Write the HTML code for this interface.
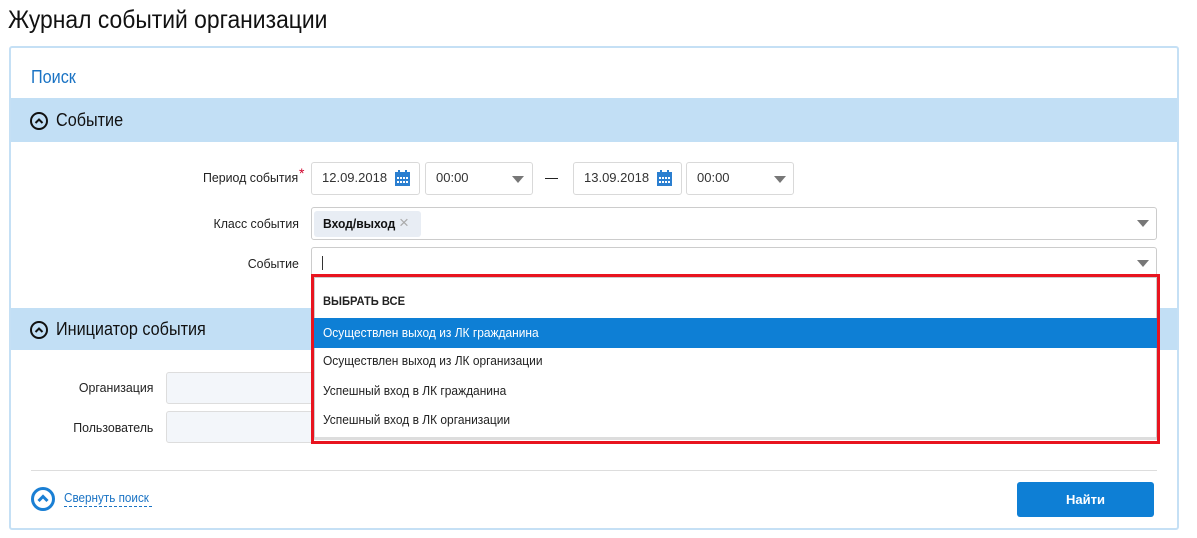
<!DOCTYPE html>
<html><head><meta charset="utf-8"><style>
*{box-sizing:border-box;margin:0;padding:0}
body{width:1197px;height:538px;background:#fff;font-family:"Liberation Sans",sans-serif;color:#111;position:relative;overflow:hidden}
.a{position:absolute}
.n{display:inline-block;transform:scaleX(0.9);transform-origin:left center;white-space:nowrap}
.t{font-size:13px;color:#222;text-align:right;white-space:nowrap}
.t span.r{display:inline-block;transform:scaleX(0.95);transform-origin:right center}
.inp{position:absolute;border:1px solid #d9d9d9;border-radius:3px;background:#fff;font-size:13px;color:#333;padding-left:10px;line-height:30px}
.arr{position:absolute;width:0;height:0;border-left:6px solid transparent;border-right:6px solid transparent;border-top:7px solid #777}
.circ{position:absolute;width:18px;height:18px;border:2px solid #111;border-radius:50%}
.item{position:absolute;left:314px;width:843px;height:30px;line-height:30px;padding-left:9px;font-size:13px;color:#222}
</style></head><body>
<div class="a" style="left:8px;top:6px;font-size:25px;color:#111"><span class="n" style="transform:scaleX(0.915)">Журнал событий организации</span></div>
<div class="a" style="left:9px;top:46px;width:1170px;height:484px;border:2px solid #c5e0f5;border-radius:3px"></div>
<div class="a" style="left:31px;top:67px;font-size:18px;color:#1a73c4"><span class="n">Поиск</span></div>
<div class="a" style="left:11px;top:98px;width:1166px;height:44px;background:#c2dff5"></div>
<div class="circ" style="left:30px;top:112px"><svg width="14" height="14" style="position:absolute;left:0;top:0"><path d="M3.5 9 L7 5.5 L10.5 9" stroke="#111" stroke-width="2" fill="none"/></svg></div>
<div class="a" style="left:56px;top:110px;font-size:18px"><span class="n">Событие</span></div>

<div class="a t" style="right:899px;top:170px"><span class="r">Период события</span></div>
<div class="a" style="left:299px;top:165px;color:#d0002a;font-size:14px">*</div>
<div class="inp" style="left:311px;top:162px;width:109px;height:33px">12.09.2018</div>
<svg class="a" style="left:395px;top:170px" width="15" height="16"><rect x="0" y="2" width="15" height="14" fill="#2b7fd0"/><rect x="3" y="0" width="2" height="4" fill="#2b7fd0"/><rect x="10" y="0" width="2" height="4" fill="#2b7fd0"/><g fill="#fff"><rect x="2" y="7" width="2" height="2"/><rect x="5" y="7" width="2" height="2"/><rect x="8" y="7" width="2" height="2"/><rect x="11" y="7" width="2" height="2"/><rect x="2" y="11" width="2" height="2"/><rect x="5" y="11" width="2" height="2"/><rect x="8" y="11" width="2" height="2"/><rect x="11" y="11" width="2" height="2"/></g></svg>
<div class="inp" style="left:425px;top:162px;width:108px;height:33px">00:00</div>
<div class="arr" style="left:512px;top:176px"></div>
<div class="a" style="left:545px;top:178px;width:13px;height:1px;background:#222"></div>
<div class="inp" style="left:573px;top:162px;width:109px;height:33px">13.09.2018</div>
<svg class="a" style="left:657px;top:170px" width="15" height="16"><rect x="0" y="2" width="15" height="14" fill="#2b7fd0"/><rect x="3" y="0" width="2" height="4" fill="#2b7fd0"/><rect x="10" y="0" width="2" height="4" fill="#2b7fd0"/><g fill="#fff"><rect x="2" y="7" width="2" height="2"/><rect x="5" y="7" width="2" height="2"/><rect x="8" y="7" width="2" height="2"/><rect x="11" y="7" width="2" height="2"/><rect x="2" y="11" width="2" height="2"/><rect x="5" y="11" width="2" height="2"/><rect x="8" y="11" width="2" height="2"/><rect x="11" y="11" width="2" height="2"/></g></svg>
<div class="inp" style="left:686px;top:162px;width:108px;height:33px">00:00</div>
<div class="arr" style="left:774px;top:176px"></div>

<div class="a t" style="right:898px;top:216px"><span class="r">Класс события</span></div>
<div class="inp" style="left:311px;top:207px;width:846px;height:33px;border-color:#ccc"></div>
<div class="a" style="left:314px;top:211px;width:107px;height:26px;background:#e8edf4;border-radius:3px;font-size:13px;font-weight:bold;line-height:26px;padding-left:9px"><span class="n" style="transform:scaleX(0.93)">Вход/выход</span></div>
<div class="a" style="left:399px;top:210px;color:#aaa;font-size:17px;line-height:26px">×</div>
<div class="arr" style="left:1137px;top:220px"></div>

<div class="a t" style="right:898px;top:256px"><span class="r">Событие</span></div>
<div class="inp" style="left:311px;top:247px;width:846px;height:33px;border-color:#ccc"></div>
<div class="a" style="left:322px;top:256px;width:1px;height:14px;background:#333"></div>
<div class="arr" style="left:1137px;top:260px"></div>

<div class="a" style="left:11px;top:308px;width:1166px;height:42px;background:#c2dff5"></div>
<div class="circ" style="left:30px;top:321px"><svg width="14" height="14" style="position:absolute;left:0;top:0"><path d="M3.5 9 L7 5.5 L10.5 9" stroke="#111" stroke-width="2" fill="none"/></svg></div>
<div class="a" style="left:56px;top:319px;font-size:18px"><span class="n">Инициатор события</span></div>

<div class="a t" style="right:1044px;top:380px"><span class="r">Организация</span></div>
<div class="a" style="left:166px;top:372px;width:150px;height:32px;background:#f3f6fa;border:1px solid #ddd;border-radius:3px"></div>
<div class="a t" style="right:1044px;top:420px"><span class="r">Пользователь</span></div>
<div class="a" style="left:166px;top:411px;width:150px;height:32px;background:#f3f6fa;border:1px solid #ddd;border-radius:3px"></div>

<div class="a" style="left:311px;top:274px;width:849px;height:170px;border:3px solid #e8141f;background:#fff"></div>
<div class="a" style="left:314px;top:277px;width:843px;height:163px;border:1px solid #ccc;border-bottom:3px solid #ddd"></div>
<div class="item" style="top:286px;font-weight:bold;font-size:12px"><span class="n" style="transform:scaleX(0.93)">ВЫБРАТЬ ВСЕ</span></div>
<div class="item" style="top:318px;background:#0e7fd5;color:#fff"><span class="n" style="transform:scaleX(0.92)">Осуществлен выход из ЛК гражданина</span></div>
<div class="item" style="top:346px"><span class="n" style="transform:scaleX(0.92)">Осуществлен выход из ЛК организации</span></div>
<div class="item" style="top:376px"><span class="n" style="transform:scaleX(0.92)">Успешный вход в ЛК гражданина</span></div>
<div class="item" style="top:405px"><span class="n" style="transform:scaleX(0.92)">Успешный вход в ЛК организации</span></div>

<div class="a" style="left:31px;top:470px;width:1126px;height:1px;background:#ddd"></div>
<div class="a" style="left:31px;top:487px;width:24px;height:24px;border:3px solid #1a7fd4;border-radius:50%"><svg width="18" height="18" style="position:absolute;left:0;top:0"><path d="M4.5 11 L9 6.5 L13.5 11" stroke="#1a7fd4" stroke-width="3" fill="none"/></svg></div>
<div class="a" style="left:64px;top:490px;width:88px;font-size:13px;color:#1a73c4;border-bottom:1px dashed #1a73c4;line-height:16px;white-space:nowrap"><span class="n">Свернуть поиск</span></div>
<div class="a" style="left:1017px;top:482px;width:137px;height:35px;background:#0e7fd5;border-radius:3px;color:#fff;font-weight:bold;font-size:13px;text-align:center;line-height:35px">Найти</div>
</body></html>
